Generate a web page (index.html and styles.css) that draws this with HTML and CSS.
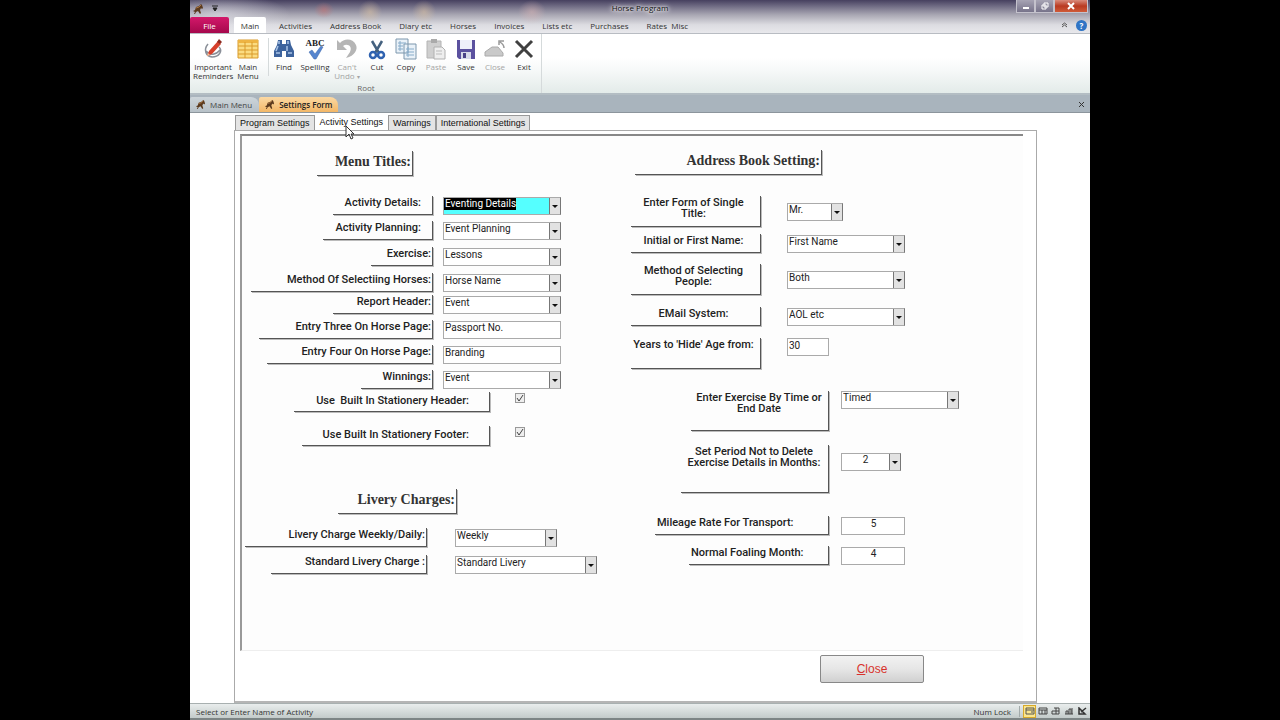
FILE: index.html
```html
<!DOCTYPE html>
<html lang="en">
<head>
    <meta charset="UTF-8">
    <meta name="viewport" content="width=device-width, initial-scale=1.0">
    <title>Horse Program</title>
    <link rel="stylesheet" href="styles.css">
</head>
<body>
    <svg class="defs" width="0" height="0">
        <symbol id="horse" viewBox="0 0 12 12">
            <path d="M1 8l2-1 1-3 3-1 2-2 1 1 1 3-1 1-1-1-1 2 1 3-1 1-2-3-2 1-1 2H2l1-2z" fill="#5b3a1e"/>
            <path d="M4 5l3-1 2-2" stroke="#a87442" fill="none"/>
        </symbol>
    </svg>
    <div class="app">
        <header class="top">
            <div class="titlebar">
                <div class="quick">
                    <svg width="12" height="12"><use href="#horse"/></svg>
                    <button class="plain" aria-label="Customize toolbar"><svg width="6" height="7" viewBox="0 0 6 7"><path d="M0 1h6M1 3h4L3 6z" stroke="#222" stroke-width="1" fill="#222"/></svg></button>
                </div>
                <h1>Horse Program</h1>
                <div class="winbtns">
                    <button aria-label="Minimize"><svg width="8" height="8" viewBox="0 0 8 8"><path d="M1 6h6" stroke="#fff" stroke-width="2"/></svg></button>
                    <button aria-label="Restore"><svg width="8" height="8" viewBox="0 0 8 8"><path d="M3 1h4v4H3zM1 3h4v4H1z" stroke="#fff" fill="none"/></svg></button>
                    <button class="exit" aria-label="Close window"><svg width="8" height="8" viewBox="0 0 8 8"><path d="M1 1l6 6M7 1L1 7" stroke="#fff" stroke-width="2"/></svg></button>
                </div>
            </div>
            <nav class="menu">
                <button class="file">File</button>
                <button class="current">Main</button>
                <button>Activities</button>
                <button>Address Book</button>
                <button>Diary etc</button>
                <button>Horses</button>
                <button>Invoices</button>
                <button>Lists etc</button>
                <button>Purchases</button>
                <button>Rates&nbsp; Misc</button>
                <div class="help">
                    <svg width="7" height="6" viewBox="0 0 7 6"><path d="M1 3l2.500-2L6 3M1 5l2.500-2L6 5" stroke="#555" fill="none"/></svg>
                    <button class="plain question" aria-label="Help">?</button>
                </div>
            </nav>
        </header>

        <div class="ribbon">
            <div class="group">
                <div class="tools">
                    <button class="wide">
                        <svg viewBox="0 0 22 22"><path d="M6 6c-5 6-2 12 4 13 7 0 11-6 7-10M4 13c4 5 10 4 14-1" stroke="#8a8f98" stroke-width="1.500" fill="none"/><path d="M5 18l2-5 9-10 3 3-9 10z" fill="#d6402c"/><path d="M15 4l2-3 3 3-2 2z" fill="#8c2a20"/><path d="M5 18l1-3 2 2z" fill="#f4c9a0"/></svg>
                        Important<br>Reminders
                    </button>
                    <button>
                        <svg viewBox="0 0 22 22"><path d="M1 2h20v18H1z" fill="#fbdc82" stroke="#d99a2b"/><path d="M1 2h20v3H1z" fill="#eeb443"/><path d="M1 8h20M1 12h20M1 16h20M8 4v16M15 4v16" stroke="#d99a2b"/></svg>
                        Main<br>Menu
                    </button>
                    <span class="divider"></span>
                    <button>
                        <svg viewBox="0 0 22 22"><path d="M5 2h4v4h4V2h4l1 5 3 6v6h-8v-6H9v6H1v-6l3-6z" fill="#3d639d"/><path d="M5 8l-2 5M14 8v5M3 15h4M15 15h4M6 3v3M15 3v3" stroke="#a9c3e6" stroke-width="1.500"/></svg>
                        Find
                    </button>
                    <button class="mid">
                        <svg viewBox="0 0 22 22"><text x="11" y="8" text-anchor="middle" class="abc">ABC</text><path d="M5 14l3-2 3 4 6-8 2 1-7 12h-2z" fill="#5585cf" stroke="#3a64a8" stroke-width=".5"/></svg>
                        Spelling
                    </button>
                    <button class="mid" disabled>
                        <svg viewBox="0 0 22 22"><path d="M1 2v10h10L7 8c4-3 10 0 7 6l-4 6c9-2 12-9 10-13C17 0 8 0 4 5z" fill="#b5b5b5"/></svg>
                        Can't<br>Undo <small>▾</small>
                    </button>
                    <button class="slim">
                        <svg viewBox="0 0 22 22"><path d="M6 3l7 12M16 3L9 15" stroke="#44617f" stroke-width="2.500"/><circle cx="7" cy="17" r="3" fill="none" stroke="#2f62b0" stroke-width="2.500"/><circle cx="15" cy="17" r="3" fill="none" stroke="#2f62b0" stroke-width="2.500"/></svg>
                        Cut
                    </button>
                    <button>
                        <svg viewBox="0 0 22 22"><path d="M1 1h12v14H1zM9 6h12v15H9z" fill="#e9f1f8" stroke="#7d97ad"/><path d="M3 5h8M3 8h5M3 11h5M11 11h8M11 14h8M11 17h8M13 9v10M5 3v10" stroke="#86abc9"/></svg>
                        Copy
                    </button>
                    <button disabled>
                        <svg viewBox="0 0 22 22"><path d="M2 3h14v17H2z" fill="#cfcfcf" stroke="#b4b4b4"/><path d="M6 1h6v4H6z" fill="#aaa"/><path d="M9 9h8l3 3v9H9z" fill="#eee" stroke="#b0b0b0"/><path d="M11 13h6M11 16h6" stroke="#bbb"/></svg>
                        Paste
                    </button>
                    <button>
                        <svg viewBox="0 0 22 22"><path d="M2 2h18v19H4l-2-2z" fill="#5b519f"/><path d="M5 2h12v9H5z" fill="#eef0fa"/><path d="M6 14h10v7H6z" fill="#d8daea"/><path d="M8 15h3v5H8z" fill="#4a4288"/></svg>
                        Save
                    </button>
                    <button class="slim" disabled>
                        <svg viewBox="0 0 22 22"><path d="M1 18v-4l7-5h6l5 6v3z" fill="#c9c9c9" stroke="#aaa"/><path d="M20 10c0-3-1-4-4-6M20 3h-5v4" stroke="#999" stroke-width="1.500" fill="none"/></svg>
                        Close
                    </button>
                    <button>
                        <svg viewBox="0 0 22 22"><path d="M3 3l16 16M19 3L3 19" stroke="#404040" stroke-width="3"/></svg>
                        Exit
                    </button>
                </div>
                <div class="groupname">Root</div>
            </div>
        </div>

        <div class="doctabs">
            <button><svg width="11" height="11"><use href="#horse"/></svg>Main Menu</button>
            <button class="open"><svg width="11" height="11"><use href="#horse"/></svg>Settings Form</button>
            <button class="plain shut" aria-label="Close tab"><svg width="7" height="7" viewBox="0 0 7 7"><path d="M1 1l5 5M6 1L1 6" stroke="#333"/></svg></button>
        </div>

        <main>
            <div class="tabs">
                <button>Program Settings</button>
                <button class="active">Activity Settings
                    <svg class="pointer" width="10" height="15" viewBox="0 0 10 15"><path d="M1 1v11l3-3 2 5 2-1-2-4h3z" fill="#fff" stroke="#333"/></svg>
                </button>
                <button>Warnings</button>
                <button>International Settings</button>
            </div>
            <form class="page">
                <div class="panel">
                    <div class="col left">
                        <h2 class="h-menu">Menu Titles:</h2>
                        <div class="rows menu-rows">
                            <div class="row"><label class="w100 inset" for="details">Activity Details:</label><select id="details" class="hot"><option>Eventing Details</option></select></div>
                            <div class="row"><label class="w110 inset" for="planning">Activity Planning:</label><select id="planning"><option>Event Planning</option></select></div>
                            <div class="row"><label class="w62" for="exercise">Exercise:</label><select id="exercise"><option>Lessons</option></select></div>
                            <div class="row"><label class="w182" for="horses">Method Of Selectiing Horses:</label><select id="horses"><option>Horse Name</option></select></div>
                            <div class="row"><label class="w100" for="report">Report Header:</label><select id="report"><option>Event</option></select></div>
                            <div class="row"><label class="w174" for="three">Entry Three On Horse Page:</label><input type="text" id="three" value="Passport No."></div>
                            <div class="row"><label class="w166" for="four">Entry Four On Horse Page:</label><input type="text" id="four" value="Branding"></div>
                            <div class="row"><label class="w72" for="winnings">Winnings:</label><select id="winnings"><option>Event</option></select></div>
                        </div>
                        <div class="rows check-rows">
                            <div class="row"><label class="w196 deep" for="header">Use&nbsp; Built In Stationery Header:</label><input type="checkbox" id="header" checked></div>
                            <div class="row"><label class="w188 deep" for="footer">Use Built In Stationery Footer:</label><input type="checkbox" id="footer" checked></div>
                        </div>
                        <h2 class="h-livery">Livery Charges:</h2>
                        <div class="rows livery-rows">
                            <div class="row"><label class="w182" for="charge">Livery Charge Weekly/Daily:</label><select id="charge" class="f102"><option>Weekly</option></select></div>
                            <div class="row"><label class="w156" for="standard">Standard Livery Charge :</label><select id="standard" class="f142"><option>Standard Livery</option></select></div>
                        </div>
                    </div>

                    <div class="col right">
                        <h2 class="h-book">Address Book Setting:</h2>
                        <div class="rows book-rows">
                            <div class="row"><label class="tall" for="title">Enter Form of Single<br>Title:</label><select id="title" class="f56"><option>Mr.</option></select></div>
                            <div class="row"><label for="first">Initial or First Name:</label><select id="first"><option>First Name</option></select></div>
                            <div class="row"><label class="tall" for="people">Method of Selecting<br>People:</label><select id="people"><option>Both</option></select></div>
                            <div class="row"><label for="email">EMail System:</label><select id="email"><option>AOL etc</option></select></div>
                            <div class="row top-row"><label class="tall" for="age">Years to 'Hide' Age from:</label><input type="text" id="age" class="f42" value="30"></div>
                        </div>
                        <div class="rows time-rows">
                            <div class="row top-row"><label class="w138 h40" for="timed">Enter Exercise By Time or<br>End Date</label><select id="timed"><option>Timed</option></select></div>
                            <div class="row"><label class="w148 h48" for="period">Set Period Not to Delete<br>Exercise Details in Months:</label><select id="period" class="f60 centre"><option>2</option></select></div>
                            <div class="row"><label class="w174 start" for="mileage">Mileage Rate For Transport:</label><input type="text" id="mileage" class="f64 centre" value="5"></div>
                            <div class="row"><label class="w140 start" for="foaling">Normal Foaling Month:</label><input type="text" id="foaling" class="f64 centre" value="4"></div>
                        </div>
                    </div>
                </div>
                <button type="button" class="close"><u>C</u>lose</button>
            </form>
        </main>

        <footer>
            <span class="hint">Select or Enter Name of Activity</span>
            <span class="lock">Num Lock</span>
            <div class="views">
                <button class="on" aria-label="Form view"><svg viewBox="0 0 10 8"><path d="M1 1h8v6H1zM1 3h8M6 5h2" stroke="#555" fill="none"/></svg></button>
                <button aria-label="Datasheet view"><svg viewBox="0 0 10 8"><path d="M1 1h8v6H1zM1 3h8M4 3v4M7 3v4" stroke="#444" fill="none"/></svg></button>
                <button aria-label="Pivot table view"><svg viewBox="0 0 10 8"><path d="M3 1h5v6H1V4h7M5 1v6" stroke="#444" fill="none"/></svg></button>
                <button aria-label="Pivot chart view"><svg viewBox="0 0 10 8"><path d="M2 7V4h2v3M5 7V2h2v5M8 7V1M1 7h8" stroke="#444" fill="none"/></svg></button>
                <button aria-label="Design view"><svg viewBox="0 0 10 8"><path d="M2 1v6h6zM4 5l5-4" stroke="#333" stroke-width="1.500" fill="none"/></svg></button>
            </div>
        </footer>
    </div>
</body>
</html>
```
FILE: styles.css
```css
* {
    box-sizing: border-box;
}
body {
    margin: 0;
    padding: 0 190px;
    background-color: black;
    font-family: "Open Sans", "Noto Sans", sans-serif;
    font-size: 8px;
    color: #333;
}
button {
    font: inherit;
    color: inherit;
    border: none;
    background: none;
    padding: 0;
    white-space: nowrap;
}
.defs {
    position: absolute;
}
.app {
    display: flex;
    flex-direction: column;
    min-height: 100vh;
    background-color: white;
}

/* title bar and menu */
.top {
    background:
        radial-gradient(ellipse 10px 8px at 134px 10px, #c9737188, transparent),
        radial-gradient(ellipse 12px 12px at 180px 12px, #dcc3a388, transparent),
        radial-gradient(ellipse 12px 12px at 234px 12px, #dcc3a388, transparent),
        radial-gradient(ellipse 14px 12px at 342px 12px, #d9b5b588, transparent),
        radial-gradient(ellipse 70px 20px at 30px 14px, #e4e4ea99, transparent),
        linear-gradient(#46405f, #77738a 22%, #a9a7b3 45%, #dcdce1 75%, #e8e8ec);
    border-bottom: 1px solid #b8bcc2;
}
.titlebar {
    display: grid;
    grid-template-columns: 1fr auto 1fr;
    height: 17px;
}
.quick {
    display: flex;
    align-items: center;
    gap: 8px;
    padding-left: 2px;
}
.plain {
    display: flex;
    align-items: center;
}
h1 {
    margin: 0;
    font-size: 8px;
    font-weight: normal;
    line-height: 16px;
    color: #111;
    text-shadow: 0 0 3px white, 0 0 5px white, 0 0 6px white;
}
.winbtns {
    display: flex;
    justify-content: flex-end;
    height: 13px;
    padding-right: 2px;
}
.winbtns button {
    display: flex;
    align-items: center;
    justify-content: center;
    width: 19px;
    border: 1px solid #c4c2cc;
    border-top: none;
    background: linear-gradient(#a7a4b4, #77738a);
}
.winbtns .exit {
    width: 34px;
    background: linear-gradient(#d98b7c, #b93a22 50%, #cf5a38);
}
.menu {
    display: flex;
    height: 16px;
}
.menu > button {
    padding: 0 9px;
    line-height: 15px;
}
.menu .file {
    width: 39px;
    margin-right: 5px;
    color: white;
    border-radius: 2px 2px 0 0;
    background: linear-gradient(#d3186a, #a5084c);
}
.menu .current {
    width: 32px;
    margin-right: 4px;
    padding: 0;
    background-color: white;
    border-radius: 2px 2px 0 0;
}
.help {
    display: flex;
    align-items: center;
    gap: 8px;
    margin-left: auto;
    padding-right: 3px;
}
.question {
    justify-content: center;
    width: 11px;
    height: 11px;
    border-radius: 50%;
    background-color: #2f74c5;
    color: white;
    font-weight: bold;
}

/* ribbon */
.ribbon {
    display: flex;
    height: 61px;
    background: linear-gradient(white 40%, #f7f9f9 60%, #e3ebe9);
    border-bottom: 2px solid #b3bdc3;
}
.group {
    display: flex;
    flex-direction: column;
    padding: 4px 2px 0 3px;
    border-right: 1px solid #d5dadb;
}
.tools {
    display: flex;
    flex: 1;
}
.tools button {
    display: block;
    width: 30px;
    line-height: 9px;
    align-self: flex-start;
}
.tools .wide {
    width: 40px;
}
.tools .mid {
    width: 32px;
}
.tools .slim {
    width: 28px;
}
.tools button:disabled {
    color: #a5a5a5;
}
.tools svg {
    display: block;
    width: 22px;
    height: 22px;
    margin: 0 auto 2px;
}
.tools small {
    font-size: 6px;
}
.abc {
    font: bold 9px "Liberation Serif", serif;
    fill: #222;
}
.divider {
    width: 1px;
    height: 38px;
    margin: 0 0 0 5px;
    background-color: #d5dadb;
}
.groupname {
    text-align: center;
    line-height: 12px;
    color: #666;
}

/* open documents */
.doctabs {
    display: flex;
    height: 18px;
    padding-top: 2px;
    background-color: #a9b4bd;
    border-bottom: 1px solid #8c959c;
}
.doctabs button {
    display: flex;
    align-items: center;
    gap: 4px;
    padding: 0 7px 0 5px;
    color: #444;
    background: linear-gradient(#cdd5da, #b7c1c8);
    border-radius: 2px 8px 0 0;
}
.doctabs .open {
    color: #222;
    font-weight: 600;
    padding-right: 6px;
    background: linear-gradient(#fbd9a4, #f3b767);
}
.doctabs .shut {
    margin-left: auto;
    padding: 0 5px;
    background: none;
}

/* settings form */
main {
    flex: 1;
    display: flex;
    flex-direction: column;
    padding: 1px 53px 0 44px;
    font-family: "Liberation Sans", Arial, sans-serif;
    font-size: 10px;
    color: #222;
}
.tabs {
    display: flex;
    align-items: flex-end;
    height: 16px;
    padding-left: 1px;
}
.tabs button {
    height: 15px;
    padding: 0 4px;
    border: 1px solid #999;
    border-bottom: none;
    background-color: #e4e4e4;
    font-size: 9px;
    line-height: 12px;
    color: #111;
}
.tabs .active {
    position: relative;
    height: 16px;
    padding-bottom: 2px;
    border-color: transparent;
    background-color: white;
}
.pointer {
    position: absolute;
    left: 29px;
    top: 10px;
    z-index: 1;
}
.page {
    flex: 1;
    display: flex;
    flex-direction: column;
    padding: 3px 13px 18px 5px;
    border: 1px solid #aaa;
    border-bottom: 2px solid #b5b5b5;
}
.panel {
    flex: 1;
    display: grid;
    grid-template-columns: 389px 1fr;
    border-top: 2px solid #888;
    border-left: 2px solid #999;
    border-bottom: 1px solid #eee;
    background-color: #fdfdfd;
}
h2 {
    height: 25px;
    margin: 0;
    padding: 2px 1px 0 0;
    border-right: 1px solid #555;
    border-bottom: 1px solid #555;
    box-shadow: 1px 1px 0 #bbb;
    font: bold 14px/18px "Liberation Serif", serif;
    color: #333;
    text-align: right;
}
.h-menu {
    width: 96px;
    margin: 15px 0 20px 75px;
}
.h-livery {
    width: 119px;
    margin: 0 0 14px 96px;
}
.h-book {
    width: 187px;
    margin: 14px 0 21px 4px;
}
.rows {
    display: grid;
    align-content: start;
}
.menu-rows {
    grid-template-rows: 25px 26px 26px 22px 25px 25px 25px 22px;
    width: 319px;
}
.check-rows {
    grid-template-rows: 34px 63px;
    width: 284px;
}
.livery-rows {
    grid-template-rows: 27px 27px;
}
.book-rows {
    grid-template-rows: 38px 30px 43px 31px 53px;
}
.time-rows {
    grid-template-rows: 54px 71px 30px 30px;
}
.row {
    display: flex;
    align-items: center;
    align-self: start;
    gap: 10px;
}
.top-row {
    align-items: flex-start;
}
label {
    height: 19px;
    padding: 1px 1px 0 0;
    border-right: 1px solid #555;
    border-bottom: 1px solid #555;
    box-shadow: 1px 1px 0 #bbb;
    font: 500 11px/12px Roboto, "Liberation Sans", sans-serif;
    text-align: right;
    white-space: nowrap;
}
.left label {
    margin-left: auto;
}
.left .inset {
    padding-right: 11px;
}
.left .deep {
    height: 20px;
    padding: 3px 20px 0 0;
}
.check-rows .row {
    display: grid;
    grid-template-columns: 248px 1fr;
    gap: 25px;
}
.livery-rows .row {
    display: grid;
    grid-template-columns: 185px 1fr;
    gap: 28px;
}
.book-rows .row {
    gap: 26px;
}
.book-rows label {
    width: 130px;
    padding-right: 4px;
    text-align: center;
}
.time-rows label {
    margin-left: auto;
    text-align: center;
}
.time-rows .row {
    display: grid;
    grid-template-columns: 198px 1fr;
    gap: 12px;
}
.book-rows .tall {
    height: 31px;
    line-height: 11px;
}
.time-rows .h40 {
    height: 40px;
    line-height: 11px;
}
.time-rows .h48 {
    height: 48px;
    line-height: 11px;
}
.time-rows .start {
    text-align: left;
    padding-left: 2px;
}
.w62 { width: 62px; }
.w72 { width: 72px; }
.w100 { width: 100px; }
.w110 { width: 110px; }
.w138 { width: 138px; }
.w140 { width: 140px; }
.w148 { width: 148px; }
.w156 { width: 156px; }
.w166 { width: 166px; }
.w174 { width: 174px; }
.w182 { width: 182px; }
.w188 { width: 188px; }
.w196 { width: 196px; }

select,
input[type="text"] {
    width: 118px;
    height: 18px;
    padding: 0 0 4px 1px;
    border: 1px solid #aaa;
    border-radius: 0;
    background-color: white;
    font: 10px/12px Roboto, "Liberation Sans", sans-serif;
    color: #222;
}
select {
    appearance: none;
    background-image: url("data:image/svg+xml,%3Csvg xmlns='http://www.w3.org/2000/svg' width='12' height='18'%3E%3Crect x='.5' y='.5' width='11' height='17' fill='%23e2e2e2' stroke='%23777'/%3E%3Cpath d='M3 8h6l-3 3z' fill='%23111'/%3E%3C/svg%3E");
    background-repeat: no-repeat;
    background-position: right center;
    background-origin: border-box;
    border-right-color: #777;
}
.hot {
    color: white;
    background-color: #5ff;
    background-image:
        url("data:image/svg+xml,%3Csvg xmlns='http://www.w3.org/2000/svg' width='12' height='18'%3E%3Crect x='.5' y='.5' width='11' height='17' fill='%23e2e2e2' stroke='%23777'/%3E%3Cpath d='M3 8h6l-3 3z' fill='%23111'/%3E%3C/svg%3E"),
        linear-gradient(black, black);
    background-position: right center, 1px 1px;
    background-size: 12px 18px, 72px 12px;
}
select.f56 { width: 56px; }
select.f60 { width: 60px; }
select.f102 { width: 102px; }
select.f142 { width: 142px; }
input.f42 { width: 42px; }
input.f64 { width: 64px; }
.row .centre {
    text-align: center;
}
select.centre {
    margin-bottom: 14px;
    padding-right: 12px;
}
input[type="checkbox"] {
    appearance: none;
    width: 10px;
    height: 10px;
    margin: 0 0 8px;
    border: 1px solid #999;
    background: #eee url("data:image/svg+xml,%3Csvg xmlns='http://www.w3.org/2000/svg' width='8' height='8'%3E%3Cpath d='M1 4l2 3 4-6' fill='none' stroke='%23444'/%3E%3C/svg%3E") center no-repeat;
}
.close {
    align-self: flex-end;
    width: 104px;
    height: 28px;
    margin: 4px 99px 0 0;
    border: 1px solid #888;
    border-radius: 2px;
    background: linear-gradient(#f2f2f2, #e6e6e6 50%, #d0d0d0);
    color: #d8322c;
    font-size: 12px;
}

/* status bar */
footer {
    display: flex;
    align-items: center;
    height: 17px;
    padding: 0 2px 0 6px;
    background: linear-gradient(#e9eded, #c3cbca);
    border-top: 1px solid #a8b0b0;
    border-bottom: 2px solid #7d8585;
}
.hint {
    flex: 1;
}
.lock {
    padding-right: 8px;
    border-right: 1px solid #a3abab;
}
.views {
    display: flex;
    padding-left: 3px;
}
.views button {
    display: flex;
    align-items: center;
    justify-content: center;
    width: 13px;
    height: 13px;
}
.views .on {
    border: 1px solid #d7a92a;
    background-color: #fbe68e;
}
.views svg {
    width: 10px;
    height: 8px;
}
```
